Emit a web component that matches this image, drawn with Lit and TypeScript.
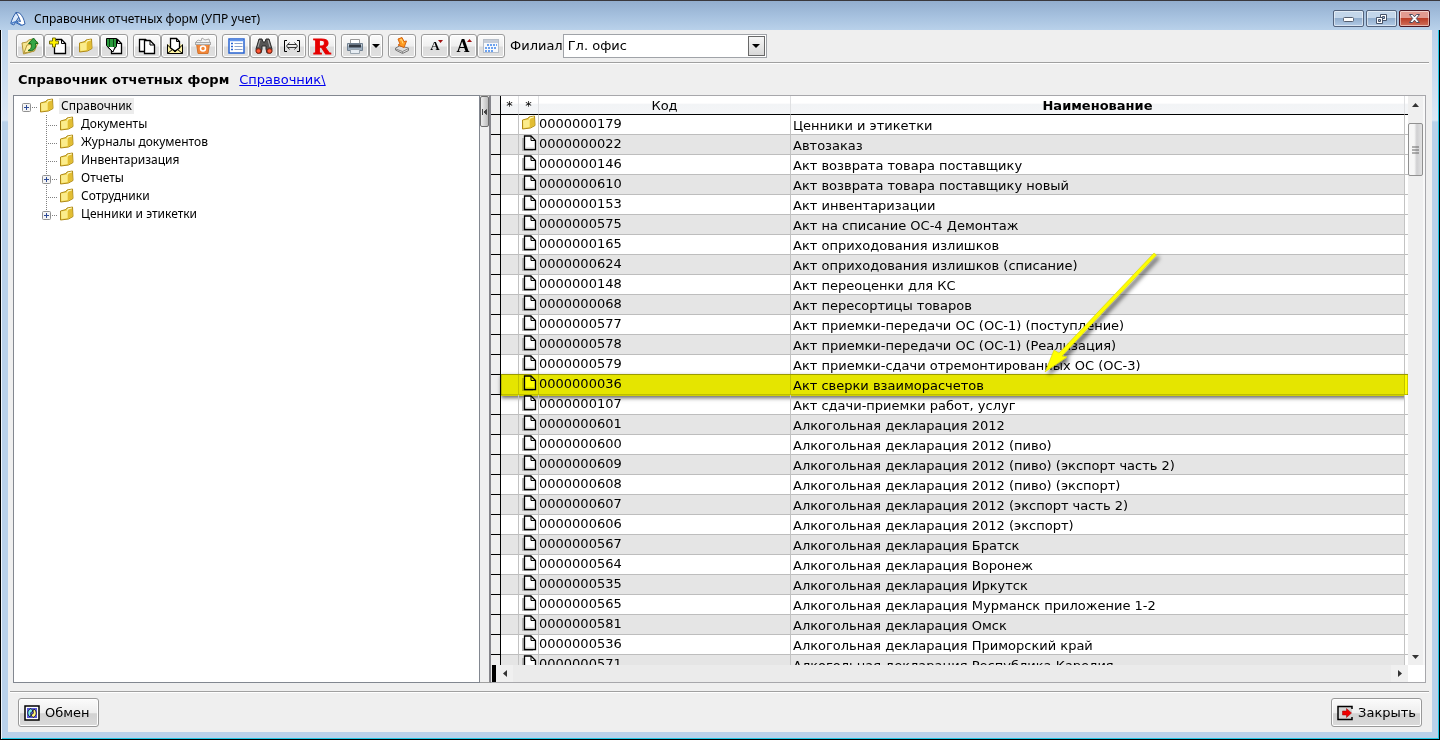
import { LitElement, html, css, svg, nothing } from "lit";
import { customElement, state } from "lit/decorators.js";

type Row = { code: string; name: string; folder?: boolean; marked?: boolean };

const ROWS: Row[] = [
  { code: "0000000179", name: "Ценники и этикетки", folder: true },
  { code: "0000000022", name: "Автозаказ" },
  { code: "0000000146", name: "Акт возврата товара поставщику" },
  { code: "0000000610", name: "Акт возврата товара поставщику новый" },
  { code: "0000000153", name: "Акт инвентаризации" },
  { code: "0000000575", name: "Акт на списание ОС-4 Демонтаж" },
  { code: "0000000165", name: "Акт оприходования излишков" },
  { code: "0000000624", name: "Акт оприходования излишков (списание)" },
  { code: "0000000148", name: "Акт переоценки для КС" },
  { code: "0000000068", name: "Акт пересортицы товаров" },
  { code: "0000000577", name: "Акт приемки-передачи ОС (ОС-1) (поступление)" },
  { code: "0000000578", name: "Акт приемки-передачи ОС (ОС-1) (Реализация)" },
  { code: "0000000579", name: "Акт приемки-сдачи отремонтированных ОС (ОС-3)" },
  { code: "0000000036", name: "Акт сверки взаиморасчетов", marked: true },
  { code: "0000000107", name: "Акт сдачи-приемки работ, услуг" },
  { code: "0000000601", name: "Алкогольная декларация 2012" },
  { code: "0000000600", name: "Алкогольная декларация 2012 (пиво)" },
  { code: "0000000609", name: "Алкогольная декларация 2012 (пиво) (экспорт часть 2)" },
  { code: "0000000608", name: "Алкогольная декларация 2012 (пиво) (экспорт)" },
  { code: "0000000607", name: "Алкогольная декларация 2012 (экспорт часть 2)" },
  { code: "0000000606", name: "Алкогольная декларация 2012 (экспорт)" },
  { code: "0000000567", name: "Алкогольная декларация Братск" },
  { code: "0000000564", name: "Алкогольная декларация Воронеж" },
  { code: "0000000535", name: "Алкогольная декларация Иркутск" },
  { code: "0000000565", name: "Алкогольная декларация Мурманск приложение 1-2" },
  { code: "0000000581", name: "Алкогольная декларация Омск" },
  { code: "0000000536", name: "Алкогольная декларация Приморский край" },
  { code: "0000000571", name: "Алкогольная декларация Республика Карелия" },
];

const TREE = [
  { name: "Документы" },
  { name: "Журналы документов" },
  { name: "Инвентаризация" },
  { name: "Отчеты", box: true },
  { name: "Сотрудники" },
  { name: "Ценники и этикетки", box: true },
];

const icon = (body: unknown, size = 20) =>
  html`<svg width=${size} height=${size} viewBox="0 0 ${size} ${size}" aria-hidden="true">${body}</svg>`;

const folderShape = svg`
  <path d="M1.500 5 L7 3.500 L8 2 L13.500 1 L14 10.500 L9.500 13 L1.500 14 Z" fill="#f0d548" stroke="#b08a18"/>
  <path d="M2 5.500 L8.500 4.500 L8.500 12 L2.500 13 Z" fill="#fbec8c"/>
  <path d="M9 4.500 L13 2 L13.500 10 L9 12.500 Z" fill="#e2bd33"/>
  <path d="M8.500 4.500 L9 2.800 L12.800 2" fill="none" stroke="#fffbd0"/>`;
const folderIcon = () => icon(folderShape, 16);

const pageIcon = () =>
  icon(svg`<path d="M1 3h2v11h9v2H1z" fill="#b4b4b4"/>
    <path d="M3.500 1h6.500l4.500 4.500v9h-11z" fill="#fff" stroke="#000" stroke-width="1.300"/>
    <path d="M10 1v4.500h4.500" fill="none" stroke="#000"/>
    <path d="M5 13h8.500V7" fill="none" stroke="#ccc"/>`, 16);

const ICONS = {
  up: svg`<path d="M2 7l5-1 1.500-2 4-1v4l5-1-3 9-11 3z" fill="#f5e58f" stroke="#b39638"/>
    <path d="M4 17l3-8 11-2-4 8z" fill="#fff0a4" stroke="#b39638"/>
    <path d="M8 14.500c3-1 4-3 3-7H8.500l5-5.500 4.500 5.500h-2.500c1 5-2 8-7.500 7z" fill="#35a645" stroke="#15691f"/>`,
  create: svg`<path d="M6.500 3.500h7l4 4v10h-11z" fill="#fff" stroke="#000" stroke-width="1.300"/><path d="M13.500 3.500v4h4" fill="none" stroke="#000"/>
    <path d="M4.500 2v3H1.500v3h3v3h3V8h3V5h-3V2z" fill="#fff200" stroke="#77700e"/>`,
  folder: svg`<g transform="translate(2 2)">${folderShape}</g>`,
  edit: svg`<path d="M7.500 3.500h6l4 4v10h-10z" fill="#fff" stroke="#000" stroke-width="1.300"/><path d="M13.500 3.500v4h4" fill="none" stroke="#000"/>
    <path d="M2.500 2.500h10v8l-3.500 4-3-1-3.500-4z" fill="#2a9b3d" stroke="#000"/>
    <path d="M5.500 3v8M9.500 3v8" stroke="#0c4715"/><path d="M4 11l5 5 2-5" fill="#fff" stroke="#000"/>`,
  copy: svg`<path d="M2.500 3.500h6l3 3v9h-9z" fill="#fff" stroke="#000" stroke-width="1.300"/>
    <path d="M7.500 4.500h5.500l4.500 4.500v8.500h-10z" fill="#fff" stroke="#000" stroke-width="1.300"/><path d="M13 4.500v4.500h4.500" fill="none" stroke="#000"/>`,
  mail: svg`<path d="M2.500 8.500v9h15v-9" fill="#fff4a3" stroke="#000"/>
    <path d="M5.500 12V2.500h6l3 3V12L10 15z" fill="#fff" stroke="#000" stroke-width="1.300"/><path d="M11.500 2.500v3h3M2.500 9l7.500 7 7.500-7M2.500 17.500L8 13m9.500 4.500L12 13" fill="none" stroke="#000"/>`,
  trash: svg`<path d="M3 6l2-2 3 1 1-3 3 2 4-1 1 4H3z" fill="#f4f4f4" stroke="#aaa"/>
    <path d="M3.500 7.500h13l-1.500 10H5z" fill="#f38638" stroke="#d0742e"/><rect x="2.500" y="6.500" width="15" height="2" fill="#e8e8e8" stroke="#aaa"/>
    <circle cx="10" cy="12.500" r="2.500" fill="none" stroke="#fff" stroke-width="1.500"/>`,
  list: svg`<rect x="3" y="3" width="15" height="14" fill="#fff" stroke="#2864d2" stroke-width="1.500"/>
    <path d="M3.500 4.500h14" stroke="#5e94ef" stroke-width="1.500"/><path d="M5 7.500h2m-2 3h2m-2 3h2" stroke="#2864d2" stroke-width="1.500"/>
    <path d="M8.500 7.500h8m-8 3h8m-8 3h8" stroke="#8aa2cc"/>`,
  find: svg`<path d="M5 3h3l1 3h2l1-3h3l3 10-1 4h-4l-1-4v-3H8v3l-1 4H3l-1-4z" fill="#555" stroke="#2b2b2b"/>
    <path d="M6 4L4 11M14 4l2 7" stroke="#aaa"/><ellipse cx="4.500" cy="15" rx="2.600" ry="2.300" fill="#ff5936" stroke="#7b1c0b"/>
    <ellipse cx="15.500" cy="15" rx="2.600" ry="2.300" fill="#ff5936" stroke="#7b1c0b"/>`,
  range: svg`<path d="M5 4.500H2.500v11H5M15 4.500h2.500v11H15" fill="none" stroke="#000"/>
    <path d="M7.500 6.500L4.500 10l3 3.500M12.500 6.500l3 3.500-3 3.500M5.500 8.500h9m-9 3h9" fill="none" stroke="#333"/>`,
  print: svg`<path d="M5.500 8V3.500h9V8" fill="#fff" stroke="#999"/><path d="M2.500 7.500h15v7h-15z" fill="#9daebf" stroke="#708090"/>
    <path d="M4 8.500h12v3H4z" fill="#333b44"/><path d="M5.500 13.500h9v4h-9z" fill="#e7edf3" stroke="#9ba6b0"/><path d="M3 9h1m12 0h1" stroke="#eee"/>`,
  down: svg`<path d="M0 0h8L4 4z" fill="#000"/>`,
  load: svg`<path d="M3.500 12l4-2 9 2v2.500l-6 3-7-3.500z" fill="#ddd" stroke="#7b7b7b"/><path d="M4 13l6.500 2.500 6-3M10.500 15.500v1.500" fill="none" stroke="#888"/>
    <path d="M6 3l4-1.500 2 4 2.500-.500-2.500 6.500-6-2.500 2-1z" fill="#ff9b20" stroke="#d56410"/><path d="M8 4l1.500-.500 1.500 4" stroke="#ffe183" fill="none"/>`,
  calendar: svg`<rect x="2.500" y="3.500" width="15" height="13" fill="#f6f8fb" stroke="#b6bec9"/><path d="M3 5.500h14" stroke="#c5ccd8" stroke-width="3"/>
    <path d="M6 9h10M4 12h12M4 15h9" stroke="#6ba1ef" stroke-width="2" stroke-dasharray="2 1"/>`,
  minor: svg`<path d="M13 4h5l-2.500 3z" fill="#a01010"/>`,
  major: svg`<path d="M16.500 3l2.500 3h-5z" fill="#a01010"/>`,
};

@customElement("app-root")
export class AppRoot extends LitElement {
  @state() private branch = "Гл. офис";

  static styles = css`
    :host {
      display: block;
      font: 13px/16px Verdana, "DejaVu Sans", sans-serif;
      color: #000;
    }
    * { box-sizing: border-box; }
    svg { display: block; flex: none; }
    button, select { font: inherit; color: inherit; padding: 0; margin: 0; }

    .window { height: 100vh; display: flex; flex-direction: column; background: #000; }
    .titlebar {
      flex: none; height: 30px; padding: 6px 10px 0 10px;
      display: flex; align-items: center; gap: 8px;
      border-top: 1px solid #3a383c;
      background: linear-gradient(#93aece, #a5c0de 50%, #b9d1ea);
    }
    .title { margin: 0; flex: 1; font: 12px/16px "Segoe UI", "Noto Sans", sans-serif; }
    .sysbuttons { display: flex; gap: 2px; }
    .sys {
      width: 31px; height: 17px; display: grid; place-items: center;
      border: 1px solid #52627c; border-radius: 2px;
      box-shadow: inset 0 0 0 1px rgba(255, 255, 255, .5);
      background: linear-gradient(#c3d6ea 45%, #92aece 50%, #b3cbe6);
    }
    .sys.close { border-color: #4c1520; background: linear-gradient(#e29a90 45%, #bb3d27 50%, #d0705c); }

    .frame {
      flex: 1; min-height: 0; display: flex;
      border: 1px solid #000; border-top: 0;
      background: linear-gradient(#b9d1ea, #dce8f6 90px, #b9d1ea 92px);
      box-shadow: inset 1px 0 #eef5fc, inset -1px -1px #1fc6e4;
      padding: 0 7px 7px 7px;
    }
    .client { flex: 1; min-width: 0; display: flex; flex-direction: column; background: #efefef; }

    .toolbar { display: flex; align-items: center; gap: 5px; padding: 4px 8px; height: 32px; flex: none; }
    .group { display: flex; }
    .gap { width: 2px; }
    .tool {
      width: 28px; height: 24px; display: grid; place-items: center;
      border: 1px solid #9c9c9c; border-radius: 3px;
      box-shadow: inset 0 0 0 1px #fff;
      background: linear-gradient(#fbfbfb, #efefef 50%, #dcdcdc 55%, #e0e0e0);
    }
    .tool.slim { width: 14px; }
    .tool > * { grid-area: 1 / 1; }
    .glyph { font: bold 15px/20px "Liberation Serif", serif; }
    .glyph.small { font-size: 13px; }
    .glyph.large { font-size: 18px; }
    .glyph.red { font-size: 24px; color: #e60000; -webkit-text-stroke: 1px #e60000; }
    .rule { flex: none; height: 2px; margin: 0 3px 0 2px; background: linear-gradient(#a0a0a0 50%, #fff 50%); }

    .branch { display: flex; align-items: center; }
    .pick { position: relative; width: 204px; }
    .pick select {
      width: 100%; height: 24px; padding-left: 4px; appearance: none;
      background: #fff; border: 1px solid #a0a3a8; border-radius: 0;
    }
    .pickarrow {
      position: absolute; right: 2px; top: 2px; width: 17px; height: 20px; pointer-events: none;
      display: grid; place-items: center; border: 1px solid #686868; background: linear-gradient(#f6f6f6, #d8d8d8);
    }

    .crumbs { display: flex; gap: 10px; padding: 8px 10px 7px; margin: 0; flex: none; }
    .crumbs h2 { margin: 0; font: inherit; font-weight: bold; }
    .crumbs a { color: #0000ee; }

    .panes { flex: 1; min-height: 0; display: flex; padding: 0 6px 0 5px; margin-bottom: 8px; }
    .tree {
      flex: 0 1 467px; margin: 0; list-style: none; background: #fff; border: 1px solid #828790; overflow: hidden;
      padding: 1px 0 0 8px; font: 12px/16px "Segoe UI", "Noto Sans", sans-serif;
    }
    .tree ul { margin: 0; padding: 0 0 0 20px; list-style: none; }
    .node { height: 18px; display: flex; align-items: center; }
    .node span { padding: 0 2px; margin-left: 4px; }
    .node span.current { background: #ececec; }

    .splitter { flex: none; width: 11px; background: #f0f0f0; border: 1px solid #a0a0a0; border-width: 1px 2px 1px 0; border-right-color: #85858b; }
    .grip {
      width: 9px; height: 31px; display: grid; place-items: center; padding: 0;
      border: 1px solid #6d6d6d; border-radius: 2px; background: linear-gradient(90deg, #eee, #bcbcbc);
    }

    .gridbox {
      flex: 1; min-width: 0; display: grid; grid-template: minmax(0, 1fr) 17px / minmax(0, 1fr) 17px;
      background: #fff; border: 1px solid #a7a7ab; border-left: 0;
    }
    .viewport { overflow: hidden; }
    table { width: 100%; table-layout: fixed; border-collapse: separate; border-spacing: 0; }
    .w-gutter { width: 10px; }
    .w-mark { width: 18px; }
    .w-kind { width: 20px; }
    .w-code { width: 252px; }
    .w-tail { width: 3px; }
    th, td { padding: 0; text-align: left; font-weight: normal; white-space: nowrap; vertical-align: top; }
    th {
      height: 19px; padding-top: 2px; line-height: 16px; text-align: center; border-bottom: 1px solid #000;
      border-right: 1px solid #dfe0e2; background: linear-gradient(#fff 40%, #f2f4f6 45%, #f4f5f7);
    }
    th.bold { font-weight: bold; }
    td { height: 20px; line-height: 18px; border-bottom: 1px solid #bdbdbd; border-right: 1px solid #c3c3c3; }
    tbody tr { position: relative; }
    tbody tr:nth-child(even) td { background: #e5e5e5; }
    tbody tr td.gutter, th.gutter { background: #efefef; border-right: 1px solid #000; border-bottom: 1px solid #000; }
    th.tail, td.tail { border-right: 0; }
    tbody tr td.tail { background: #fff; }
    td.name { padding: 3px 0 0 2px; line-height: 16px; }
    td.kind { padding: 0 0 0 2px; }
    .marker {
      position: absolute; inset: -1px 0 -1px 10px; mix-blend-mode: multiply; pointer-events: none;
      background: #ffff00; border: 1px solid #d0d000; box-shadow: 0 2px 4px rgba(0, 0, 0, .6);
    }
    .pointer { position: absolute; left: 550px; bottom: 11px; pointer-events: none; }

    .vbar { display: flex; flex-direction: column; align-items: flex-start; background: #efefef; border-right: 2px solid #f8f8f8; }
    .end { display: grid; place-items: center; }
    .vbar .end { width: 15px; height: 17px; }
    .thumb {
      width: 15px; height: 53px; margin: 10px 0 auto; display: grid; place-items: center;
      border: 1px solid #909090; border-radius: 2px; background: linear-gradient(90deg, #f6f6f6 40%, #cfcfd1 60%, #e2e2e2);
    }
    .hbar { display: flex; justify-content: space-between; background: #ebebeb; }
    .stop { width: 4px; margin-left: 1px; background: #000; }
    .hbar .end { width: 17px; background: #f0f0f0; }
    .hbar .fill { flex: 1; }

    .footer { display: flex; justify-content: space-between; padding: 5px 10px 5px; flex: none; }
    .command {
      height: 29px; min-width: 81px; display: flex; align-items: center; gap: 5px; padding: 0 5px;
      border: 1px solid #999; border-radius: 3px; box-shadow: inset 0 0 0 1px #fff;
      background: linear-gradient(#fbfbfb, #eee 50%, #d2d2d2 55%, #dadada);
    }
  `;

  private tool(label: string, body: unknown, glyph: unknown = nothing) {
    return html`<button class="tool" title=${label} aria-label=${label}>${glyph}${icon(body)}</button>`;
  }

  private joint(opts: { box?: boolean; root?: boolean; last?: boolean }) {
    return html`<svg width="17" height="18" viewBox="0 0 17 18" aria-hidden="true">
      ${opts.root ? nothing : svg`<path d=${opts.last ? "M4.500 0v9" : "M4.500 0v18"} stroke="#808080" stroke-dasharray="1 1"/>`}
      <path d="M4 10.500h12" stroke="#808080" stroke-dasharray="1 1" />
      ${opts.box
        ? svg`<rect x=".5" y="6.500" width="8" height="8" rx="1" fill="#f4f4f4" stroke="#919191"/><path d="M2 10.500h5M4.500 8v5" stroke="#2e4b96"/>`
        : nothing}
    </svg>`;
  }

  private renderToolbar() {
    return html`<div class="toolbar" role="toolbar">
      <div class="group">
        ${this.tool("Вверх", ICONS.up)} ${this.tool("Создать", ICONS.create)}
        ${this.tool("Папка", ICONS.folder)} ${this.tool("Изменить", ICONS.edit)}
      </div>
      <div class="group">
        ${this.tool("Копировать", ICONS.copy)} ${this.tool("Открыть", ICONS.mail)} ${this.tool("Удалить", ICONS.trash)}
      </div>
      <div class="group">
        ${this.tool("Список", ICONS.list)} ${this.tool("Найти", ICONS.find)} ${this.tool("Ширина", ICONS.range)}
        <span class="gap"></span>
        ${this.tool("Регистр", nothing, html`<span class="glyph red">R</span>`)}
      </div>
      <div class="group">
        ${this.tool("Печать", ICONS.print)}
        <button class="tool slim" aria-label="Варианты печати"><svg width="8" height="4">${ICONS.down}</svg></button>
      </div>
      <div class="group">${this.tool("Загрузить", ICONS.load)}</div>
      <div class="group">
        ${this.tool("Мельче", ICONS.minor, html`<span class="glyph small">A</span>`)}
        ${this.tool("Крупнее", ICONS.major, html`<span class="glyph large">A</span>`)}
        ${this.tool("Календарь", ICONS.calendar)}
      </div>
      <div class="branch">
        <label for="branch">Филиал</label>
        <div class="pick">
          <select id="branch" .value=${this.branch} @change=${(e: Event) => (this.branch = (e.target as HTMLSelectElement).value)}>
            <option>Гл. офис</option>
          </select>
          <span class="pickarrow"><svg width="8" height="4">${ICONS.down}</svg></span>
        </div>
      </div>
    </div>`;
  }

  private renderRow(r: Row) {
    return html`<tr>
      <td class="gutter"></td>
      <td></td>
      <td class="kind">${r.folder ? folderIcon() : pageIcon()}</td>
      <td class="code">${r.code}</td>
      <td class="name">${r.name}</td>
      <td class="tail">${r.marked
        ? html`<div class="marker"></div>
            <svg class="pointer" width="130" height="140" viewBox="0 0 130 140" aria-hidden="true">
              <defs><filter id="soft" x="-20%" y="-20%" width="150%" height="150%">
                <feDropShadow dx="3" dy="3" stdDeviation="2" flood-color="#000" flood-opacity=".6" />
              </filter></defs>
              <path d="M113 9L115.500 11L21 112L26 113L4 128L13 106L18 109Z" fill="#ffff00" stroke="#c8c800" stroke-width=".5" filter="url(#soft)" />
            </svg>`
        : nothing}</td>
    </tr>`;
  }

  render() {
    return html`<div class="window">
      <header class="titlebar">
        ${icon(svg`<path d="M6 1.500C3.500 5 2 8 .800 12.500l3 1.500L9.500 5z" fill="#dbe9fb" stroke="#2f5ea8"/>
          <path d="M6 1.500l3.500.500c3 3 4.500 6 5.500 11l-3.500 1.500-6-3 3-1.500 2 .500-2-5z" fill="#fff" stroke="#2f5ea8"/>
          <path d="M1 12.500l5-2 6 4" fill="none" stroke="#4d7fc8" stroke-width="1.500"/>`, 16)}
        <h1 class="title">Справочник отчетных форм (УПР учет)</h1>
        <div class="sysbuttons">
          <button class="sys" aria-label="Свернуть"><svg width="12" height="6"><rect x=".5" y="1.500" width="10" height="4" rx="1" fill="#fff" stroke="#555f70"/></svg></button>
          <button class="sys" aria-label="Восстановить"><svg width="13" height="12"><path d="M5.500 1.500h6v6h-6z" fill="#fff" stroke="#46536a"/><path d="M7.500 3.500h2v2h-2z" fill="#9db5d2" stroke="#46536a"/><path d="M1.500 4.500h6v6h-6z" fill="#fff" stroke="#46536a"/><path d="M3.500 6.500h2v2h-2z" fill="#9db5d2" stroke="#46536a"/></svg></button>
          <button class="sys close" aria-label="Закрыть окно"><svg width="13" height="11"><path d="M1.500 1.500h3l2 2.300 2-2.300h3L8.300 5.500l3.200 4h-3l-2-2.300-2 2.300h-3l3.200-4z" fill="#fff" stroke="#4d4d60"/></svg></button>
        </div>
      </header>
      <div class="frame">
        <main class="client">
          ${this.renderToolbar()}
          <div class="rule"></div>
          <nav class="crumbs"><h2>Справочник отчетных форм</h2><a href="#">Справочник\\</a></nav>
          <div class="panes">
            <ul class="tree">
              <li>
                <div class="node">${this.joint({ box: true, root: true })}${folderIcon()}<span class="current">Справочник</span></div>
                <ul>
                  ${TREE.map((n, i) => html`<li class="node">${this.joint({ box: n.box, last: i === TREE.length - 1 })}${folderIcon()}<span>${n.name}</span></li>`)}
                </ul>
              </li>
            </ul>
            <div class="splitter"><button class="grip" aria-label="Скрыть дерево"><svg width="5" height="6"><path d="M.5 0v6M4.500 .5L2 3l2.500 2.500z" stroke="#444" fill="#444"/></svg></button></div>
            <div class="gridbox">
              <div class="viewport">
                <table>
                  <colgroup>
                    <col class="w-gutter" /><col class="w-mark" /><col class="w-kind" /><col class="w-code" /><col /><col class="w-tail" />
                  </colgroup>
                  <thead>
                    <tr><th class="gutter"></th><th>*</th><th>*</th><th>Код</th><th class="bold">Наименование</th><th class="tail"></th></tr>
                  </thead>
                  <tbody>${ROWS.map((r) => this.renderRow(r))}</tbody>
                </table>
              </div>
              <div class="vbar">
                <span class="end"><svg width="7" height="4"><path d="M0 4h7L3.500 0z" fill="#333"/></svg></span>
                <span class="thumb"><svg width="7" height="8"><path d="M0 1h7M0 4h7M0 7h7" stroke="#666"/></svg></span>
                <span class="end"><svg width="7" height="4"><path d="M0 0h7L3.500 4z" fill="#333"/></svg></span>
              </div>
              <div class="hbar">
                <span class="stop"></span>
                <span class="end"><svg width="4" height="7"><path d="M4 0v7L0 3.500z" fill="#333"/></svg></span>
                <span class="fill"></span>
                <span class="end"><svg width="4" height="7"><path d="M0 0v7l4-3.500z" fill="#333"/></svg></span>
              </div>
            </div>
          </div>
          <div class="rule"></div>
          <footer class="footer">
            <button class="command">
              ${icon(svg`<rect x="1" y="1" width="14" height="14" fill="#fff" stroke="#000" stroke-width="1.500"/>
                <rect x="3" y="3" width="10" height="10" fill="#5858dc"/><path d="M7 3.500C3 5 3 10 6 12l1-2c-1-2 0-3 2-4z" fill="#79eaf0" stroke="#000" stroke-width=".7"/>
                <path d="M9 12.500c4-1.500 4-6.500 1-8.500L9 6c1 2 0 3-2 4z" fill="#fff17a" stroke="#000" stroke-width=".7"/>`, 16)}
              <span>Обмен</span>
            </button>
            <button class="command">
              ${icon(svg`<path d="M15 4V1.500H1v13h14V12" fill="#d5d5d5" stroke="#000" stroke-width="1.500"/>
                <path d="M5.500 6h4V3.500L14.500 8l-5 4.500V10h-4z" fill="#f00000" stroke="#900" stroke-width=".5"/>`, 16)}
              <span>Закрыть</span>
            </button>
          </footer>
        </main>
      </div>
    </div>`;
  }
}
